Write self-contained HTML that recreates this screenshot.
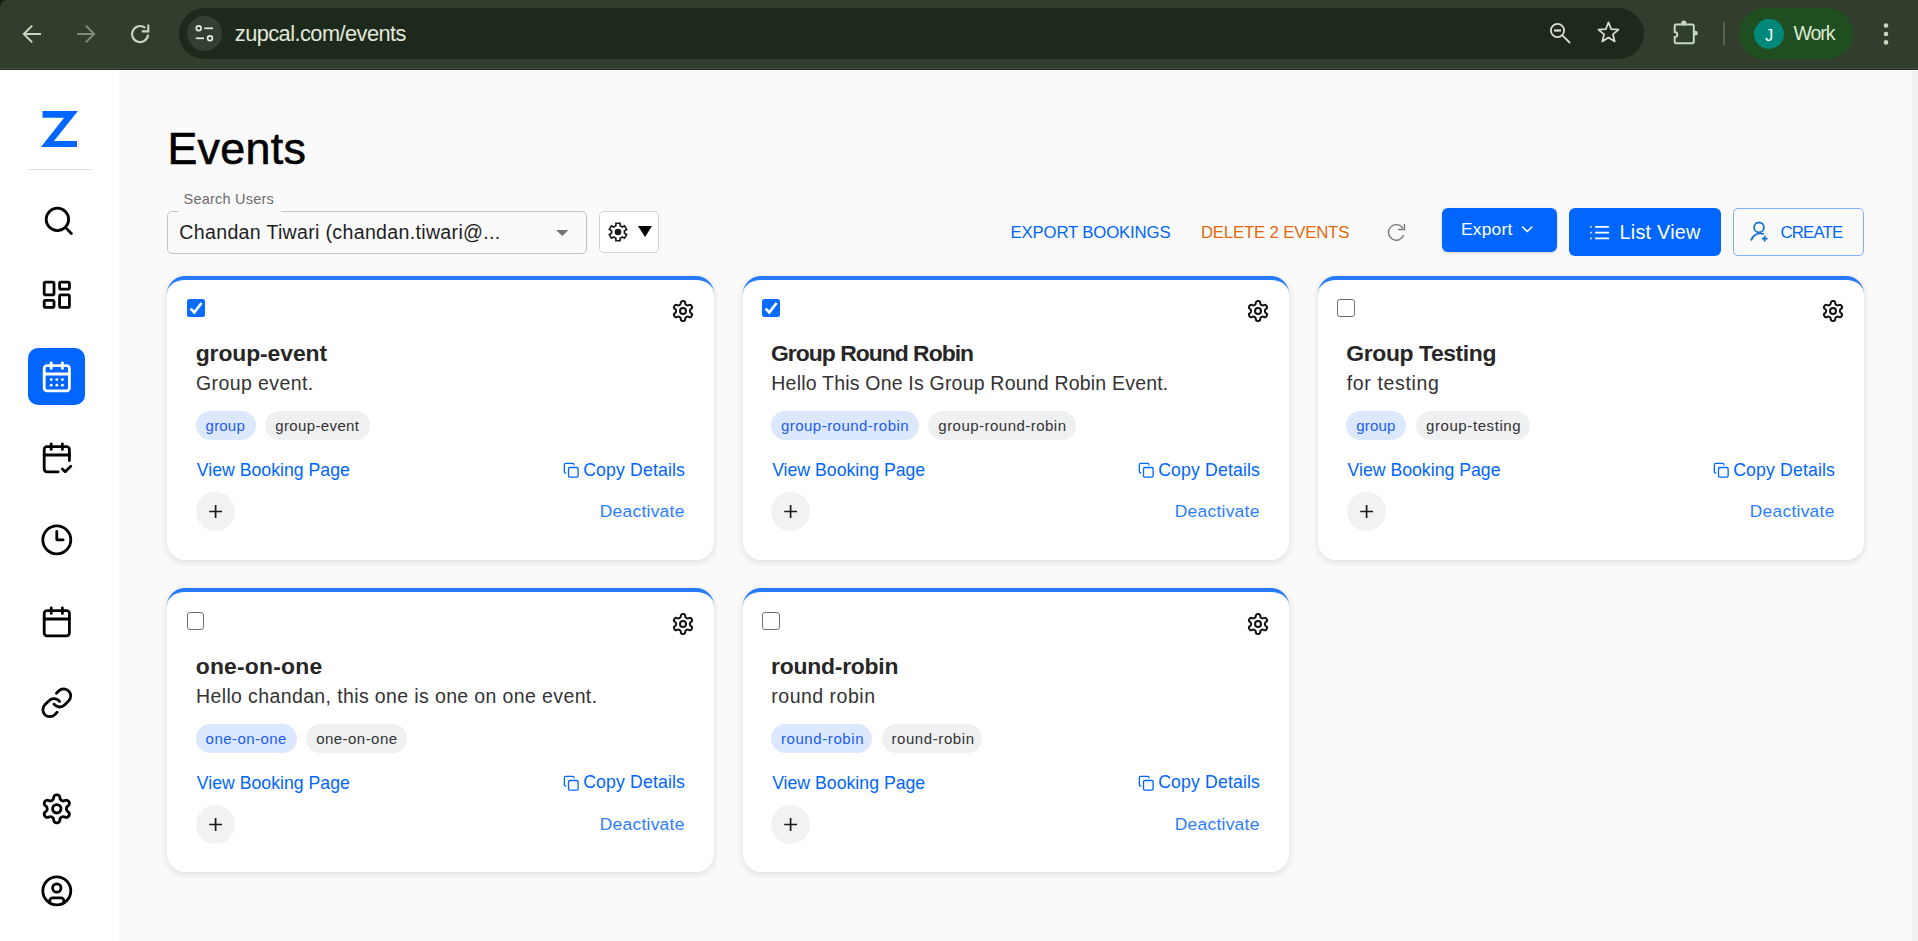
<!DOCTYPE html>
<html><head><meta charset="utf-8"><title>Events</title>
<style>
html,body{margin:0;padding:0;}
body{width:1918px;height:941px;overflow:hidden;position:relative;background:#fafafa;font-family:"Liberation Sans", sans-serif;}
</style></head><body>
<div style="position:absolute;left:0;top:0;width:1918px;height:69px;background:#313d2d;"></div>
<div style="position:absolute;left:0;top:0;width:7px;height:7px;background:#121c10;"></div><div style="position:absolute;left:0;top:0;width:14px;height:14px;border-top-left-radius:7px;background:#313d2d;"></div>
<div style="position:absolute;left:0;top:68px;width:1918px;height:1px;background:#454b43;"></div>
<div style="position:absolute;left:0;top:69px;width:1918px;height:1px;background:#25301f;"></div>
<svg style="position:absolute;left:0;top:0" width="170" height="69" fill="none" stroke-linecap="butt" stroke-linejoin="miter"><g stroke="#c6d8bf" stroke-width="2"><path d="M41 34H24.5"/><path d="M32.2 25.6 23.8 34l8.4 8.4"/></g><g stroke="#7e8c78" stroke-width="2"><path d="M77 34h16.5"/><path d="M85.8 25.6 94.2 34l-8.4 8.4"/></g><g stroke="#c6d8bf" stroke-width="2.1"><path d="M148.1 34.7A8 8 0 1 1 145.2 27.9"/><path d="M148.3 24.6V31.4H141.8"/></g></svg>
<div style="position:absolute;left:179px;top:8px;width:1465px;height:51px;border-radius:25.5px;background:#1d2a1b;"></div>
<div style="position:absolute;left:186.5px;top:15.7px;width:35.6px;height:35.6px;border-radius:50%;background:#333f30;"></div>
<svg style="position:absolute;left:0;top:0" width="230" height="69" fill="none" stroke="#e6ebe0" stroke-width="1.7"><circle cx="198.7" cy="28.3" r="2.4"/><path d="M204.2 28.3h8.8"/><path d="M195.8 38.3h8.2"/><circle cx="210" cy="38.3" r="2.4"/></svg>
<div style="position:absolute;left:234.80px;top:23.45px;font-size:21.8px;line-height:21.8px;color:#e3e8dc;font-weight:400;letter-spacing:-0.556px;white-space:nowrap;">zupcal.com/events</div>
<svg style="position:absolute;left:1540px;top:10px" width="100" height="48" fill="none" stroke="#d9ddd4" stroke-width="1.8"><circle cx="17.5" cy="20.5" r="6.6"/><path d="M14 20.5h7" stroke-width="2.2"/><path d="M22.4 25.4 30 33"/><path d="M68.50 12.30 L71.20 19.18 L78.58 19.62 L72.87 24.32 L74.73 31.48 L68.50 27.50 L62.27 31.48 L64.13 24.32 L58.42 19.62 L65.80 19.18Z" stroke-linejoin="round" stroke-width="1.7"/></svg>
<svg style="position:absolute;left:1660px;top:10px" width="50" height="48"><path d="M16.1 14.5h16.3a1.4 1.4 0 0 1 1.4 1.4v16a1.4 1.4 0 0 1-1.4 1.4H16.1a1.4 1.4 0 0 1-1.4-1.4v-4.8a2.6 2.6 0 0 0 0-5.2v-6a1.4 1.4 0 0 1 1.4-1.4z" fill="none" stroke="#c5d9bf" stroke-width="2"/><circle cx="23.8" cy="13.0" r="2.6" fill="#c5d9bf"/><circle cx="35.4" cy="23.2" r="2.4" fill="#c5d9bf"/></svg>
<div style="position:absolute;left:1723px;top:22px;width:2px;height:23px;background:#56634f;"></div>
<div style="position:absolute;left:1739px;top:8px;width:114px;height:51px;border-radius:25.5px;background:#1f4f21;"></div>
<div style="position:absolute;left:1754px;top:19px;width:30px;height:30px;border-radius:50%;background:#00897b;"></div>
<div style="position:absolute;left:1754px;top:20px;width:30px;height:30px;font-size:16.5px;line-height:30px;text-align:center;color:#fff;">J</div>
<div style="position:absolute;left:1793.50px;top:24.39px;font-size:19.5px;line-height:19.5px;color:#dfe8d3;font-weight:400;letter-spacing:-1.067px;white-space:nowrap;">Work</div>
<svg style="position:absolute;left:1878px;top:18px" width="16" height="32"><g fill="#c6d8bf"><circle cx="8" cy="7.6" r="2.3"/><circle cx="8" cy="16" r="2.3"/><circle cx="8" cy="24.4" r="2.3"/></g></svg>
<div style="position:absolute;left:0;top:70px;width:119px;height:871px;background:#ffffff;"></div>
<div style="position:absolute;left:119px;top:71px;width:1793px;height:870px;background:#fafafa;"></div>
<div style="position:absolute;left:1912px;top:71px;width:6px;height:870px;background:#f0f0f0;"></div>
<div style="position:absolute;left:0;top:70px;width:1918px;height:1px;background:#ffffff;"></div>
<svg style="position:absolute;left:0;top:0" width="119" height="200"><polygon fill="#0066ff" points="42.5,111 77.9,111 54,141 77,141 77,147 41,147 64.1,117.8 42.5,117.8"/></svg>
<div style="position:absolute;left:28px;top:169px;width:63px;height:1px;background:#dedede;"></div>
<svg style="position:absolute;left:42.00px;top:203.60px;" width="33.6" height="33.6" viewBox="0 0 24 24" fill="none" stroke="#000" stroke-width="2" stroke-linecap="round" stroke-linejoin="round"><circle cx="11" cy="11" r="8"/><path d="m21 21-4.3-4.3"/></svg>
<svg style="position:absolute;left:40.20px;top:277.90px;" width="33.6" height="33.6" viewBox="0 0 24 24" fill="none" stroke="#000" stroke-width="2" stroke-linecap="round" stroke-linejoin="round"><rect width="7" height="9" x="3" y="3" rx="1"/><rect width="7" height="5" x="14" y="3" rx="1"/><rect width="7" height="9" x="14" y="12" rx="1"/><rect width="7" height="5" x="3" y="16" rx="1"/></svg>
<div style="position:absolute;left:28px;top:348px;width:57px;height:57px;border-radius:10px;background:#0066ff;"></div>
<svg style="position:absolute;left:40.10px;top:360.00px;" width="33.6" height="33.6" viewBox="0 0 24 24" fill="none" stroke="#ffffff" stroke-width="2" stroke-linecap="round" stroke-linejoin="round"><path d="M8 2v4"/><path d="M16 2v4"/><rect width="18" height="18" x="3" y="4" rx="2"/><path d="M3 10h18"/><path d="M8 14h.01"/><path d="M12 14h.01"/><path d="M16 14h.01"/><path d="M8 18h.01"/><path d="M12 18h.01"/><path d="M16 18h.01"/></svg>
<svg style="position:absolute;left:40.00px;top:440.90px;" width="33.6" height="33.6" viewBox="0 0 24 24" fill="none" stroke="#000" stroke-width="2" stroke-linecap="round" stroke-linejoin="round"><path d="M8 2v4"/><path d="M16 2v4"/><path d="M21 14V6a2 2 0 0 0-2-2H5a2 2 0 0 0-2 2v14a2 2 0 0 0 2 2h8"/><path d="M3 10h18"/><path d="m16 20 2 2 4-4"/></svg>
<svg style="position:absolute;left:40.00px;top:522.70px;" width="33.6" height="33.6" viewBox="0 0 24 24" fill="none" stroke="#000" stroke-width="2" stroke-linecap="round" stroke-linejoin="round"><circle cx="12" cy="12" r="10"/><polyline points="12 6 12 12 16.5 12"/></svg>
<svg style="position:absolute;left:40.10px;top:604.50px;" width="33.6" height="33.6" viewBox="0 0 24 24" fill="none" stroke="#000" stroke-width="2" stroke-linecap="round" stroke-linejoin="round"><path d="M8 2v4"/><path d="M16 2v4"/><rect width="18" height="18" x="3" y="4" rx="2"/><path d="M3 10h18"/></svg>
<svg style="position:absolute;left:39.90px;top:686.00px;" width="33.6" height="33.6" viewBox="0 0 24 24" fill="none" stroke="#000" stroke-width="2" stroke-linecap="round" stroke-linejoin="round"><path d="M10 13a5 5 0 0 0 7.54.54l3-3a5 5 0 0 0-7.07-7.07l-1.72 1.71"/><path d="M14 11a5 5 0 0 0-7.54-.54l-3 3a5 5 0 0 0 7.07 7.07l1.71-1.71"/></svg>
<svg style="position:absolute;left:39.90px;top:791.85px;" width="33.6" height="33.6" viewBox="0 0 24 24" fill="none" stroke="#000" stroke-width="2" stroke-linecap="round" stroke-linejoin="round"><path d="M12.22 2h-.44a2 2 0 0 0-2 2v.18a2 2 0 0 1-1 1.73l-.43.25a2 2 0 0 1-2 0l-.15-.08a2 2 0 0 0-2.73.73l-.22.38a2 2 0 0 0 .73 2.73l.15.1a2 2 0 0 1 1 1.72v.51a2 2 0 0 1-1 1.74l-.15.09a2 2 0 0 0-.73 2.73l.22.38a2 2 0 0 0 2.73.73l.15-.08a2 2 0 0 1 2 0l.43.25a2 2 0 0 1 1 1.73V20a2 2 0 0 0 2 2h.44a2 2 0 0 0 2-2v-.18a2 2 0 0 1 1-1.73l.43-.25a2 2 0 0 1 2 0l.15.08a2 2 0 0 0 2.73-.73l.22-.39a2 2 0 0 0-.73-2.73l-.15-.08a2 2 0 0 1-1-1.74v-.5a2 2 0 0 1 1-1.74l.15-.09a2 2 0 0 0 .73-2.73l-.22-.38a2 2 0 0 0-2.73-.73l-.15.08a2 2 0 0 1-2 0l-.43-.25a2 2 0 0 1-1-1.73V4a2 2 0 0 0-2-2z"/><circle cx="12" cy="12" r="3"/></svg>
<svg style="position:absolute;left:40.00px;top:873.80px;" width="33.6" height="33.6" viewBox="0 0 24 24" fill="none" stroke="#000" stroke-width="2" stroke-linecap="round" stroke-linejoin="round"><circle cx="12" cy="12" r="10"/><circle cx="12" cy="10" r="3"/><path d="M7 20.662V19a2 2 0 0 1 2-2h6a2 2 0 0 1 2 2v1.662"/></svg>
<div style="position:absolute;left:167.40px;top:125.83px;font-size:44.8px;line-height:44.8px;color:#000000;font-weight:400;letter-spacing:0.32px;white-space:nowrap;-webkit-text-stroke:0.6px #000;">Events</div>
<div style="position:absolute;left:167px;top:211px;width:418px;height:41px;border:1.5px solid #c4c4c4;border-radius:5px;"></div>
<div style="position:absolute;left:178px;top:209px;width:103px;height:5px;background:#fafafa;"></div>
<div style="position:absolute;left:183.50px;top:191.83px;font-size:14.5px;line-height:14.5px;color:#6d6d6d;font-weight:400;letter-spacing:0.227px;white-space:nowrap;">Search Users</div>
<div style="position:absolute;left:179.30px;top:223.21px;font-size:19.6px;line-height:19.6px;color:#1e1e1e;font-weight:400;letter-spacing:0.31px;white-space:nowrap;">Chandan Tiwari (chandan.tiwari@...</div>
<svg style="position:absolute;left:550px;top:225px" width="24" height="16"><polygon fill="#757575" points="6,5 18.5,5 12.25,11"/></svg>
<div style="position:absolute;left:599px;top:211px;width:57.5px;height:39.5px;border:1.3px solid #d3d3d3;border-radius:5px;background:#ffffff;"></div>
<svg style="position:absolute;left:607.9px;top:221.9px" width="20" height="20" viewBox="0 0 20 20"><polygon points="7.86,3.76 7.95,1.24 12.05,1.24 12.14,3.76 14.34,5.03 16.56,3.84 18.61,7.40 16.48,8.73 16.48,11.27 18.61,12.60 16.56,16.16 14.34,14.97 12.14,16.24 12.05,18.76 7.95,18.76 7.86,16.24 5.66,14.97 3.44,16.16 1.39,12.60 3.52,11.27 3.52,8.73 1.39,7.40 3.44,3.84 5.66,5.03" fill="none" stroke="#1a1a1a" stroke-width="1.7" stroke-linejoin="miter"/><circle cx="10" cy="10" r="3.3" fill="#1a1a1a"/></svg>
<svg style="position:absolute;left:637px;top:225px" width="16" height="13"><polygon fill="#000" points="1,1 15,1 8,12"/></svg>
<div style="position:absolute;left:1010.50px;top:224.78px;font-size:16.8px;line-height:16.8px;color:#0066ff;font-weight:400;letter-spacing:-0.179px;white-space:nowrap;">EXPORT BOOKINGS</div>
<div style="position:absolute;left:1200.90px;top:224.78px;font-size:16.8px;line-height:16.8px;color:#e8670c;font-weight:400;letter-spacing:-0.186px;white-space:nowrap;">DELETE 2 EVENTS</div>
<svg style="position:absolute;left:1380px;top:215px" width="35" height="35" fill="none" stroke="#777" stroke-width="1.35"><path d="M23.65 20.0A7.8 7.8 0 1 1 22.9 13.27"/><path d="M24.5 9.1V14.5H18.2" stroke-linejoin="miter"/></svg>
<div style="position:absolute;left:1442px;top:208px;width:115px;height:43.5px;border-radius:6px;background:#0066ff;box-shadow:0 1px 3px rgba(0,0,0,0.18);"></div>
<div style="position:absolute;left:1461.00px;top:221.17px;font-size:17.4px;line-height:17.4px;color:#ffffff;font-weight:400;letter-spacing:0.2px;white-space:nowrap;">Export</div>
<svg style="position:absolute;left:1518.30px;top:220.40px;" width="18.5" height="18.5" viewBox="0 0 24 24" fill="none" stroke="#ffffff" stroke-width="2" stroke-linecap="round" stroke-linejoin="round"><path d="m6 9 6 6 6-6"/></svg>
<div style="position:absolute;left:1569px;top:208px;width:152px;height:47.5px;border-radius:6px;background:#0066ff;"></div>
<svg style="position:absolute;left:1587.60px;top:221.30px;" width="23.3" height="23.3" viewBox="0 0 24 24" fill="none" stroke="#ffffff" stroke-width="1.8" stroke-linecap="round" stroke-linejoin="round"><line x1="8" x2="21" y1="6" y2="6"/><line x1="8" x2="21" y1="12" y2="12"/><line x1="8" x2="21" y1="18" y2="18"/><line x1="3" x2="3.01" y1="6" y2="6"/><line x1="3" x2="3.01" y1="12" y2="12"/><line x1="3" x2="3.01" y1="18" y2="18"/></svg>
<div style="position:absolute;left:1619.50px;top:223.34px;font-size:19.8px;line-height:19.8px;color:#ffffff;font-weight:400;letter-spacing:0.262px;white-space:nowrap;">List View</div>
<div style="position:absolute;left:1733px;top:208px;width:130.8px;height:47.6px;border:1px solid #80b1ff;border-radius:5px;box-sizing:border-box;"></div>
<svg style="position:absolute;left:1744px;top:216px" width="30" height="30" fill="none" stroke="#1a73d0" stroke-width="1.8" stroke-linecap="butt"><circle cx="15" cy="11.4" r="4.9"/><path d="M7 24.5a9.5 9.5 0 0 1 12.8-6.3"/><path d="M17.8 22.6h5.8M20.7 19.7v5.8" stroke-width="1.9"/></svg>
<div style="position:absolute;left:1780.40px;top:224.58px;font-size:16.8px;line-height:16.8px;color:#0066ff;font-weight:400;letter-spacing:-0.8px;white-space:nowrap;">CREATE</div>
<div style="position:absolute;left:167.00px;top:276.00px;width:547.00px;height:284px;box-sizing:border-box;background:#fff;border-top:4px solid #2979ff;border-radius:18px;box-shadow:0 2px 7px rgba(0,0,0,0.13);"></div>
<div style="position:absolute;left:187.00px;top:299.00px;width:18px;height:18px;border-radius:2.5px;background:#0a6cff;"></div>
<svg style="position:absolute;left:187.00px;top:299.00px" width="18" height="18"><path d="M3.6 9.6 7.3 13.4 14.6 4" fill="none" stroke="#fff" stroke-width="2.6"/></svg>
<svg style="position:absolute;left:671.20px;top:298.80px;" width="24" height="24" viewBox="0 0 24 24" fill="none" stroke="#111111" stroke-width="2" stroke-linecap="round" stroke-linejoin="round"><path d="M12.22 2h-.44a2 2 0 0 0-2 2v.18a2 2 0 0 1-1 1.73l-.43.25a2 2 0 0 1-2 0l-.15-.08a2 2 0 0 0-2.73.73l-.22.38a2 2 0 0 0 .73 2.73l.15.1a2 2 0 0 1 1 1.72v.51a2 2 0 0 1-1 1.74l-.15.09a2 2 0 0 0-.73 2.73l.22.38a2 2 0 0 0 2.73.73l.15-.08a2 2 0 0 1 2 0l.43.25a2 2 0 0 1 1 1.73V20a2 2 0 0 0 2 2h.44a2 2 0 0 0 2-2v-.18a2 2 0 0 1 1-1.73l.43-.25a2 2 0 0 1 2 0l.15.08a2 2 0 0 0 2.73-.73l.22-.39a2 2 0 0 0-.73-2.73l-.15-.08a2 2 0 0 1-1-1.74v-.5a2 2 0 0 1 1-1.74l.15-.09a2 2 0 0 0 .73-2.73l-.22-.38a2 2 0 0 0-2.73-.73l-.15.08a2 2 0 0 1-2 0l-.43-.25a2 2 0 0 1-1-1.73V4a2 2 0 0 0-2-2z"/><circle cx="12" cy="12" r="3"/></svg>
<div style="position:absolute;left:195.70px;top:341.82px;font-size:22.9px;line-height:22.9px;color:#262626;font-weight:700;letter-spacing:-0.09px;white-space:nowrap;">group-event</div>
<div style="position:absolute;left:196.00px;top:374.09px;font-size:19.5px;line-height:19.5px;color:#333333;font-weight:400;letter-spacing:0.409px;white-space:nowrap;">Group event.</div>
<div style="position:absolute;left:195.70px;top:411.00px;width:60.1px;height:29px;border-radius:14.5px;background:#dce8fd;"></div>
<div style="position:absolute;left:205.60px;top:411.00px;font-size:15px;line-height:29px;color:#1a5cf0;white-space:nowrap;letter-spacing:0.2px;">group</div>
<div style="position:absolute;left:265.40px;top:411.00px;width:105px;height:29px;border-radius:14.5px;background:#eff0f2;"></div>
<div style="position:absolute;left:275.30px;top:411.00px;font-size:15px;line-height:29px;color:#333333;white-space:nowrap;letter-spacing:0.36px;">group-event</div>
<div style="position:absolute;left:196.80px;top:461.82px;font-size:17.7px;line-height:17.7px;color:#0066ff;font-weight:400;letter-spacing:0.0px;white-space:nowrap;">View Booking Page</div>
<div style="position:absolute;right:1233.00px;top:461.52px;font-size:17.7px;line-height:17.7px;color:#0066ff;font-weight:400;letter-spacing:0.127px;white-space:nowrap;">Copy Details</div>
<svg style="position:absolute;left:562.50px;top:462.00px;" width="16.5" height="16.5" viewBox="0 0 24 24" fill="none" stroke="#0066ff" stroke-width="1.9" stroke-linecap="round" stroke-linejoin="round"><rect width="14" height="14" x="8" y="8" rx="2" ry="2"/><path d="M4 16c-1.1 0-2-.9-2-2V4c0-1.1.9-2 2-2h10c1.1 0 2 .9 2 2"/></svg>
<div style="position:absolute;left:196.00px;top:492.20px;width:39px;height:39px;border-radius:50%;background:#f1f2f4;"></div>
<svg style="position:absolute;left:196.00px;top:492.20px" width="39" height="39"><path d="M13.2 19.5h12.8M19.6 13.1v12.8" stroke="#1a1a1a" stroke-width="1.7"/></svg>
<div style="position:absolute;right:1233.40px;top:503.07px;font-size:17.4px;line-height:17.4px;color:#2b7dff;font-weight:400;letter-spacing:0.267px;white-space:nowrap;">Deactivate</div>
<div style="position:absolute;left:743.00px;top:276.00px;width:546.00px;height:284px;box-sizing:border-box;background:#fff;border-top:4px solid #2979ff;border-radius:18px;box-shadow:0 2px 7px rgba(0,0,0,0.13);"></div>
<div style="position:absolute;left:762.33px;top:299.00px;width:18px;height:18px;border-radius:2.5px;background:#0a6cff;"></div>
<svg style="position:absolute;left:762.33px;top:299.00px" width="18" height="18"><path d="M3.6 9.6 7.3 13.4 14.6 4" fill="none" stroke="#fff" stroke-width="2.6"/></svg>
<svg style="position:absolute;left:1246.20px;top:298.80px;" width="24" height="24" viewBox="0 0 24 24" fill="none" stroke="#111111" stroke-width="2" stroke-linecap="round" stroke-linejoin="round"><path d="M12.22 2h-.44a2 2 0 0 0-2 2v.18a2 2 0 0 1-1 1.73l-.43.25a2 2 0 0 1-2 0l-.15-.08a2 2 0 0 0-2.73.73l-.22.38a2 2 0 0 0 .73 2.73l.15.1a2 2 0 0 1 1 1.72v.51a2 2 0 0 1-1 1.74l-.15.09a2 2 0 0 0-.73 2.73l.22.38a2 2 0 0 0 2.73.73l.15-.08a2 2 0 0 1 2 0l.43.25a2 2 0 0 1 1 1.73V20a2 2 0 0 0 2 2h.44a2 2 0 0 0 2-2v-.18a2 2 0 0 1 1-1.73l.43-.25a2 2 0 0 1 2 0l.15.08a2 2 0 0 0 2.73-.73l.22-.39a2 2 0 0 0-.73-2.73l-.15-.08a2 2 0 0 1-1-1.74v-.5a2 2 0 0 1 1-1.74l.15-.09a2 2 0 0 0 .73-2.73l-.22-.38a2 2 0 0 0-2.73-.73l-.15.08a2 2 0 0 1-2 0l-.43-.25a2 2 0 0 1-1-1.73V4a2 2 0 0 0-2-2z"/><circle cx="12" cy="12" r="3"/></svg>
<div style="position:absolute;left:771.03px;top:341.82px;font-size:22.9px;line-height:22.9px;color:#262626;font-weight:700;letter-spacing:-0.981px;white-space:nowrap;">Group Round Robin</div>
<div style="position:absolute;left:771.33px;top:374.09px;font-size:19.5px;line-height:19.5px;color:#333333;font-weight:400;letter-spacing:0.2px;white-space:nowrap;">Hello This One Is Group Round Robin Event.</div>
<div style="position:absolute;left:771.03px;top:411.00px;width:147.8px;height:29px;border-radius:14.5px;background:#dce8fd;"></div>
<div style="position:absolute;left:780.93px;top:411.00px;font-size:15px;line-height:29px;color:#1a5cf0;white-space:nowrap;letter-spacing:0.475px;">group-round-robin</div>
<div style="position:absolute;left:928.43px;top:411.00px;width:147.8px;height:29px;border-radius:14.5px;background:#eff0f2;"></div>
<div style="position:absolute;left:938.33px;top:411.00px;font-size:15px;line-height:29px;color:#333333;white-space:nowrap;letter-spacing:0.475px;">group-round-robin</div>
<div style="position:absolute;left:772.13px;top:461.82px;font-size:17.7px;line-height:17.7px;color:#0066ff;font-weight:400;letter-spacing:0.0px;white-space:nowrap;">View Booking Page</div>
<div style="position:absolute;right:658.00px;top:461.52px;font-size:17.7px;line-height:17.7px;color:#0066ff;font-weight:400;letter-spacing:0.127px;white-space:nowrap;">Copy Details</div>
<svg style="position:absolute;left:1137.50px;top:462.00px;" width="16.5" height="16.5" viewBox="0 0 24 24" fill="none" stroke="#0066ff" stroke-width="1.9" stroke-linecap="round" stroke-linejoin="round"><rect width="14" height="14" x="8" y="8" rx="2" ry="2"/><path d="M4 16c-1.1 0-2-.9-2-2V4c0-1.1.9-2 2-2h10c1.1 0 2 .9 2 2"/></svg>
<div style="position:absolute;left:771.33px;top:492.20px;width:39px;height:39px;border-radius:50%;background:#f1f2f4;"></div>
<svg style="position:absolute;left:771.33px;top:492.20px" width="39" height="39"><path d="M13.2 19.5h12.8M19.6 13.1v12.8" stroke="#1a1a1a" stroke-width="1.7"/></svg>
<div style="position:absolute;right:658.40px;top:503.07px;font-size:17.4px;line-height:17.4px;color:#2b7dff;font-weight:400;letter-spacing:0.267px;white-space:nowrap;">Deactivate</div>
<div style="position:absolute;left:1318.00px;top:276.00px;width:546.00px;height:284px;box-sizing:border-box;background:#fff;border-top:4px solid #2979ff;border-radius:18px;box-shadow:0 2px 7px rgba(0,0,0,0.13);"></div>
<div style="position:absolute;left:1337.47px;top:299.30px;width:17.5px;height:17.5px;box-sizing:border-box;border:1.5px solid #717171;border-radius:3px;background:#fff;"></div>
<svg style="position:absolute;left:1821.20px;top:298.80px;" width="24" height="24" viewBox="0 0 24 24" fill="none" stroke="#111111" stroke-width="2" stroke-linecap="round" stroke-linejoin="round"><path d="M12.22 2h-.44a2 2 0 0 0-2 2v.18a2 2 0 0 1-1 1.73l-.43.25a2 2 0 0 1-2 0l-.15-.08a2 2 0 0 0-2.73.73l-.22.38a2 2 0 0 0 .73 2.73l.15.1a2 2 0 0 1 1 1.72v.51a2 2 0 0 1-1 1.74l-.15.09a2 2 0 0 0-.73 2.73l.22.38a2 2 0 0 0 2.73.73l.15-.08a2 2 0 0 1 2 0l.43.25a2 2 0 0 1 1 1.73V20a2 2 0 0 0 2 2h.44a2 2 0 0 0 2-2v-.18a2 2 0 0 1 1-1.73l.43-.25a2 2 0 0 1 2 0l.15.08a2 2 0 0 0 2.73-.73l.22-.39a2 2 0 0 0-.73-2.73l-.15-.08a2 2 0 0 1-1-1.74v-.5a2 2 0 0 1 1-1.74l.15-.09a2 2 0 0 0 .73-2.73l-.22-.38a2 2 0 0 0-2.73-.73l-.15.08a2 2 0 0 1-2 0l-.43-.25a2 2 0 0 1-1-1.73V4a2 2 0 0 0-2-2z"/><circle cx="12" cy="12" r="3"/></svg>
<div style="position:absolute;left:1346.37px;top:341.82px;font-size:22.9px;line-height:22.9px;color:#262626;font-weight:700;letter-spacing:-0.392px;white-space:nowrap;">Group Testing</div>
<div style="position:absolute;left:1346.67px;top:374.09px;font-size:19.5px;line-height:19.5px;color:#333333;font-weight:400;letter-spacing:0.66px;white-space:nowrap;">for testing</div>
<div style="position:absolute;left:1346.37px;top:411.00px;width:60.1px;height:29px;border-radius:14.5px;background:#dce8fd;"></div>
<div style="position:absolute;left:1356.27px;top:411.00px;font-size:15px;line-height:29px;color:#1a5cf0;white-space:nowrap;letter-spacing:0.2px;">group</div>
<div style="position:absolute;left:1416.07px;top:411.00px;width:113.6px;height:29px;border-radius:14.5px;background:#eff0f2;"></div>
<div style="position:absolute;left:1425.97px;top:411.00px;font-size:15px;line-height:29px;color:#333333;white-space:nowrap;letter-spacing:0.592px;">group-testing</div>
<div style="position:absolute;left:1347.47px;top:461.82px;font-size:17.7px;line-height:17.7px;color:#0066ff;font-weight:400;letter-spacing:0.0px;white-space:nowrap;">View Booking Page</div>
<div style="position:absolute;right:83.00px;top:461.52px;font-size:17.7px;line-height:17.7px;color:#0066ff;font-weight:400;letter-spacing:0.127px;white-space:nowrap;">Copy Details</div>
<svg style="position:absolute;left:1712.50px;top:462.00px;" width="16.5" height="16.5" viewBox="0 0 24 24" fill="none" stroke="#0066ff" stroke-width="1.9" stroke-linecap="round" stroke-linejoin="round"><rect width="14" height="14" x="8" y="8" rx="2" ry="2"/><path d="M4 16c-1.1 0-2-.9-2-2V4c0-1.1.9-2 2-2h10c1.1 0 2 .9 2 2"/></svg>
<div style="position:absolute;left:1346.67px;top:492.20px;width:39px;height:39px;border-radius:50%;background:#f1f2f4;"></div>
<svg style="position:absolute;left:1346.67px;top:492.20px" width="39" height="39"><path d="M13.2 19.5h12.8M19.6 13.1v12.8" stroke="#1a1a1a" stroke-width="1.7"/></svg>
<div style="position:absolute;right:83.40px;top:503.07px;font-size:17.4px;line-height:17.4px;color:#2b7dff;font-weight:400;letter-spacing:0.267px;white-space:nowrap;">Deactivate</div>
<div style="position:absolute;left:167.00px;top:588.00px;width:547.00px;height:284px;box-sizing:border-box;background:#fff;border-top:4px solid #2979ff;border-radius:18px;box-shadow:0 2px 7px rgba(0,0,0,0.13);"></div>
<div style="position:absolute;left:186.80px;top:612.20px;width:17.5px;height:17.5px;box-sizing:border-box;border:1.5px solid #717171;border-radius:3px;background:#fff;"></div>
<svg style="position:absolute;left:671.20px;top:611.70px;" width="24" height="24" viewBox="0 0 24 24" fill="none" stroke="#111111" stroke-width="2" stroke-linecap="round" stroke-linejoin="round"><path d="M12.22 2h-.44a2 2 0 0 0-2 2v.18a2 2 0 0 1-1 1.73l-.43.25a2 2 0 0 1-2 0l-.15-.08a2 2 0 0 0-2.73.73l-.22.38a2 2 0 0 0 .73 2.73l.15.1a2 2 0 0 1 1 1.72v.51a2 2 0 0 1-1 1.74l-.15.09a2 2 0 0 0-.73 2.73l.22.38a2 2 0 0 0 2.73.73l.15-.08a2 2 0 0 1 2 0l.43.25a2 2 0 0 1 1 1.73V20a2 2 0 0 0 2 2h.44a2 2 0 0 0 2-2v-.18a2 2 0 0 1 1-1.73l.43-.25a2 2 0 0 1 2 0l.15.08a2 2 0 0 0 2.73-.73l.22-.39a2 2 0 0 0-.73-2.73l-.15-.08a2 2 0 0 1-1-1.74v-.5a2 2 0 0 1 1-1.74l.15-.09a2 2 0 0 0 .73-2.73l-.22-.38a2 2 0 0 0-2.73-.73l-.15.08a2 2 0 0 1-2 0l-.43-.25a2 2 0 0 1-1-1.73V4a2 2 0 0 0-2-2z"/><circle cx="12" cy="12" r="3"/></svg>
<div style="position:absolute;left:195.70px;top:654.72px;font-size:22.9px;line-height:22.9px;color:#262626;font-weight:700;letter-spacing:0.211px;white-space:nowrap;">one-on-one</div>
<div style="position:absolute;left:196.00px;top:686.99px;font-size:19.5px;line-height:19.5px;color:#333333;font-weight:400;letter-spacing:0.377px;white-space:nowrap;">Hello chandan, this one is one on one event.</div>
<div style="position:absolute;left:195.70px;top:723.90px;width:101px;height:29px;border-radius:14.5px;background:#dce8fd;"></div>
<div style="position:absolute;left:205.60px;top:723.90px;font-size:15px;line-height:29px;color:#1a5cf0;white-space:nowrap;letter-spacing:0.456px;">one-on-one</div>
<div style="position:absolute;left:306.30px;top:723.90px;width:101px;height:29px;border-radius:14.5px;background:#eff0f2;"></div>
<div style="position:absolute;left:316.20px;top:723.90px;font-size:15px;line-height:29px;color:#333333;white-space:nowrap;letter-spacing:0.456px;">one-on-one</div>
<div style="position:absolute;left:196.80px;top:774.72px;font-size:17.7px;line-height:17.7px;color:#0066ff;font-weight:400;letter-spacing:0.0px;white-space:nowrap;">View Booking Page</div>
<div style="position:absolute;right:1233.00px;top:774.42px;font-size:17.7px;line-height:17.7px;color:#0066ff;font-weight:400;letter-spacing:0.127px;white-space:nowrap;">Copy Details</div>
<svg style="position:absolute;left:562.50px;top:774.90px;" width="16.5" height="16.5" viewBox="0 0 24 24" fill="none" stroke="#0066ff" stroke-width="1.9" stroke-linecap="round" stroke-linejoin="round"><rect width="14" height="14" x="8" y="8" rx="2" ry="2"/><path d="M4 16c-1.1 0-2-.9-2-2V4c0-1.1.9-2 2-2h10c1.1 0 2 .9 2 2"/></svg>
<div style="position:absolute;left:196.00px;top:805.10px;width:39px;height:39px;border-radius:50%;background:#f1f2f4;"></div>
<svg style="position:absolute;left:196.00px;top:805.10px" width="39" height="39"><path d="M13.2 19.5h12.8M19.6 13.1v12.8" stroke="#1a1a1a" stroke-width="1.7"/></svg>
<div style="position:absolute;right:1233.40px;top:815.97px;font-size:17.4px;line-height:17.4px;color:#2b7dff;font-weight:400;letter-spacing:0.267px;white-space:nowrap;">Deactivate</div>
<div style="position:absolute;left:743.00px;top:588.00px;width:546.00px;height:284px;box-sizing:border-box;background:#fff;border-top:4px solid #2979ff;border-radius:18px;box-shadow:0 2px 7px rgba(0,0,0,0.13);"></div>
<div style="position:absolute;left:762.13px;top:612.20px;width:17.5px;height:17.5px;box-sizing:border-box;border:1.5px solid #717171;border-radius:3px;background:#fff;"></div>
<svg style="position:absolute;left:1246.20px;top:611.70px;" width="24" height="24" viewBox="0 0 24 24" fill="none" stroke="#111111" stroke-width="2" stroke-linecap="round" stroke-linejoin="round"><path d="M12.22 2h-.44a2 2 0 0 0-2 2v.18a2 2 0 0 1-1 1.73l-.43.25a2 2 0 0 1-2 0l-.15-.08a2 2 0 0 0-2.73.73l-.22.38a2 2 0 0 0 .73 2.73l.15.1a2 2 0 0 1 1 1.72v.51a2 2 0 0 1-1 1.74l-.15.09a2 2 0 0 0-.73 2.73l.22.38a2 2 0 0 0 2.73.73l.15-.08a2 2 0 0 1 2 0l.43.25a2 2 0 0 1 1 1.73V20a2 2 0 0 0 2 2h.44a2 2 0 0 0 2-2v-.18a2 2 0 0 1 1-1.73l.43-.25a2 2 0 0 1 2 0l.15.08a2 2 0 0 0 2.73-.73l.22-.39a2 2 0 0 0-.73-2.73l-.15-.08a2 2 0 0 1-1-1.74v-.5a2 2 0 0 1 1-1.74l.15-.09a2 2 0 0 0 .73-2.73l-.22-.38a2 2 0 0 0-2.73-.73l-.15.08a2 2 0 0 1-2 0l-.43-.25a2 2 0 0 1-1-1.73V4a2 2 0 0 0-2-2z"/><circle cx="12" cy="12" r="3"/></svg>
<div style="position:absolute;left:771.03px;top:654.72px;font-size:22.9px;line-height:22.9px;color:#262626;font-weight:700;letter-spacing:-0.22px;white-space:nowrap;">round-robin</div>
<div style="position:absolute;left:771.33px;top:686.99px;font-size:19.5px;line-height:19.5px;color:#333333;font-weight:400;letter-spacing:0.5px;white-space:nowrap;">round robin</div>
<div style="position:absolute;left:771.03px;top:723.90px;width:100.9px;height:29px;border-radius:14.5px;background:#dce8fd;"></div>
<div style="position:absolute;left:780.93px;top:723.90px;font-size:15px;line-height:29px;color:#1a5cf0;white-space:nowrap;letter-spacing:0.59px;">round-robin</div>
<div style="position:absolute;left:881.53px;top:723.90px;width:100.9px;height:29px;border-radius:14.5px;background:#eff0f2;"></div>
<div style="position:absolute;left:891.43px;top:723.90px;font-size:15px;line-height:29px;color:#333333;white-space:nowrap;letter-spacing:0.59px;">round-robin</div>
<div style="position:absolute;left:772.13px;top:774.72px;font-size:17.7px;line-height:17.7px;color:#0066ff;font-weight:400;letter-spacing:0.0px;white-space:nowrap;">View Booking Page</div>
<div style="position:absolute;right:658.00px;top:774.42px;font-size:17.7px;line-height:17.7px;color:#0066ff;font-weight:400;letter-spacing:0.127px;white-space:nowrap;">Copy Details</div>
<svg style="position:absolute;left:1137.50px;top:774.90px;" width="16.5" height="16.5" viewBox="0 0 24 24" fill="none" stroke="#0066ff" stroke-width="1.9" stroke-linecap="round" stroke-linejoin="round"><rect width="14" height="14" x="8" y="8" rx="2" ry="2"/><path d="M4 16c-1.1 0-2-.9-2-2V4c0-1.1.9-2 2-2h10c1.1 0 2 .9 2 2"/></svg>
<div style="position:absolute;left:771.33px;top:805.10px;width:39px;height:39px;border-radius:50%;background:#f1f2f4;"></div>
<svg style="position:absolute;left:771.33px;top:805.10px" width="39" height="39"><path d="M13.2 19.5h12.8M19.6 13.1v12.8" stroke="#1a1a1a" stroke-width="1.7"/></svg>
<div style="position:absolute;right:658.40px;top:815.97px;font-size:17.4px;line-height:17.4px;color:#2b7dff;font-weight:400;letter-spacing:0.267px;white-space:nowrap;">Deactivate</div>
</body></html>
